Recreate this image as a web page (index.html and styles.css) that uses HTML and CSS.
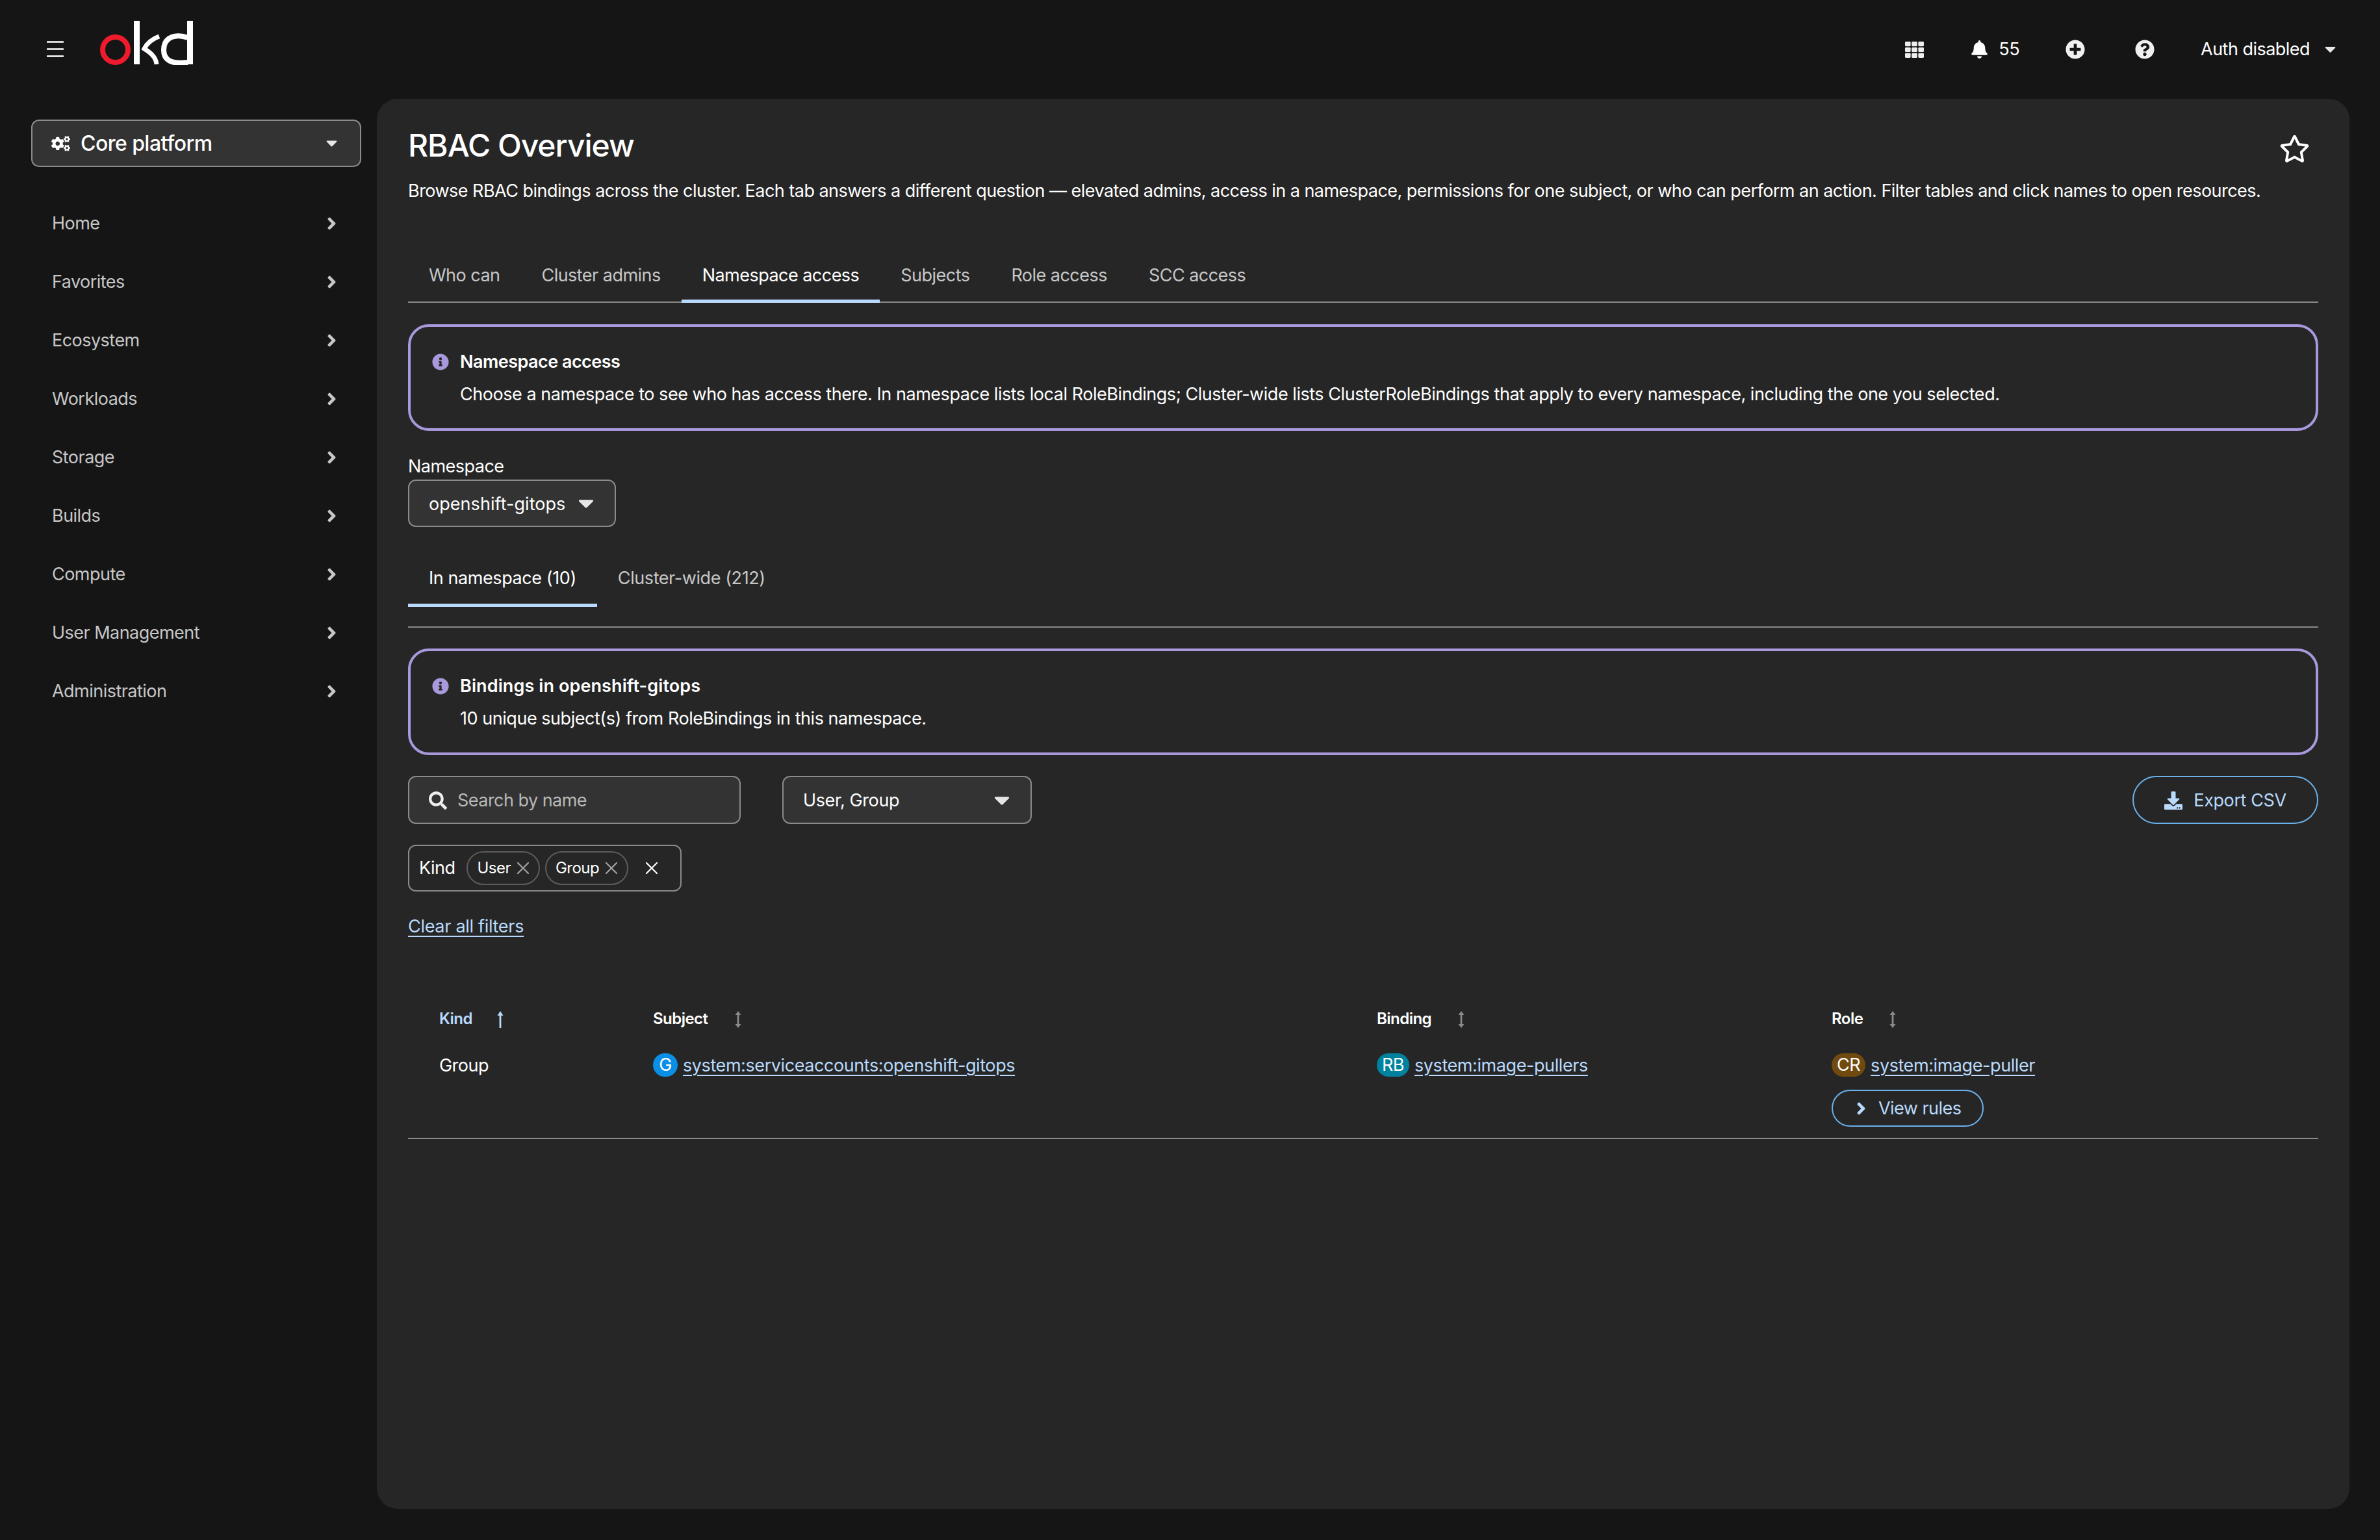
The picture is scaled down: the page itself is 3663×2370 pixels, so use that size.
FILE: index.html
```html
<!DOCTYPE html>
<html lang="en">

<head>
    <meta charset="UTF-8">
    <meta name="viewport" content="width=device-width, initial-scale=1.0">
    <title>RBAC Overview</title>
    <link rel="stylesheet" href="styles.css">
</head>

<body>
    <svg class="defs" aria-hidden="true">
        <symbol id="caret" viewBox="0 192 320 170"><path d="M31.3 192h257.3c17.8 0 26.7 21.5 14.1 34.1L174.1 354.8c-7.8 7.8-20.5 7.8-28.3 0L17.2 226.1C4.6 213.5 13.5 192 31.3 192z"/></symbol>
        <symbol id="angle" viewBox="0 0 256 512"><path d="M224.3 273l-136 136c-9.4 9.4-24.6 9.4-33.9 0l-22.6-22.6c-9.4-9.4-9.4-24.6 0-33.9l96.4-96.4-96.4-96.4c-9.4-9.4-9.4-24.6 0-33.9L54.3 103c9.4-9.4 24.6-9.4 33.9 0l136 136c9.5 9.4 9.5 24.6.1 34z"/></symbol>
        <symbol id="info" viewBox="0 0 512 512"><path d="M256 8C119.043 8 8 119.083 8 256c0 136.997 111.043 248 248 248s248-111.003 248-248C504 119.083 392.957 8 256 8zm0 110c23.196 0 42 18.804 42 42s-18.804 42-42 42-42-18.804-42-42 18.804-42 42-42zm56 254c0 6.627-5.373 12-12 12h-88c-6.627 0-12-5.373-12-12v-24c0-6.627 5.373-12 12-12h12v-64h-12c-6.627 0-12-5.373-12-12v-24c0-6.627 5.373-12 12-12h64c6.627 0 12 5.373 12 12v100h12c6.627 0 12 5.373 12 12v24z"/></symbol>
        <symbol id="close" viewBox="0 0 20 20"><path d="M2 2l16 16M18 2L2 18" fill="none" stroke="currentColor" stroke-width="2.2" stroke-linecap="round"/></symbol>
        <symbol id="sort" viewBox="0 0 10 26"><path d="M5 0l4.5 6H6.4v14h3.1L5 26 .5 20h3.1V6H.5z"/></symbol>
    </svg>

    <header class="topbar">
        <div class="brand">
            <svg class="hamburger" viewBox="0 0 26 25"><path d="M1 1.5h24M1 12.5h24M1 23.5h24" stroke="#fff" stroke-width="2.6" stroke-linecap="round"/></svg>
            <svg class="logo" viewBox="0 0 143 68" role="img" aria-label="okd">
                <circle cx="23.5" cy="44.5" r="19.5" fill="none" stroke="#ee1b2c" stroke-width="8"/>
                <path d="M52 0h9v67h-9zM134 0h9v67h-9z" fill="#fff"/>
                <path d="M91 24C80 28 72 35 68 43c8 5 18 12 19 24" fill="none" stroke="#fff" stroke-width="7"/>
                <path d="M135 26c-16-6-37-3-37 19 0 21 21 21 37 19" fill="none" stroke="#fff" stroke-width="8"/>
            </svg>
        </div>
        <div class="tools">
            <svg class="ico-grid" viewBox="0 0 29 25" fill="#eee">
                <rect width="8.6" height="7.2" rx="1.4"/><rect x="10.2" width="8.6" height="7.2" rx="1.4"/><rect x="20.4" width="8.6" height="7.2" rx="1.4"/>
                <rect y="8.9" width="8.6" height="7.2" rx="1.4"/><rect x="10.2" y="8.9" width="8.6" height="7.2" rx="1.4"/><rect x="20.4" y="8.9" width="8.6" height="7.2" rx="1.4"/>
                <rect y="17.8" width="8.6" height="7.2" rx="1.4"/><rect x="10.2" y="17.8" width="8.6" height="7.2" rx="1.4"/><rect x="20.4" y="17.8" width="8.6" height="7.2" rx="1.4"/>
            </svg>
            <svg class="ico-bell" viewBox="0 0 448 512" fill="#fff"><path d="M224 512c35.32 0 63.97-28.65 63.97-64H160.03c0 35.35 28.65 64 63.97 64zm215.39-149.71c-19.32-20.76-55.47-51.99-55.47-154.29 0-77.7-54.48-139.9-127.94-155.16V32c0-17.67-14.32-32-31.98-32s-31.98 14.33-31.98 32v20.84C118.56 68.1 64.08 130.3 64.08 208c0 102.3-36.15 133.53-55.47 154.29-6 6.45-8.66 14.16-8.61 21.71.11 16.4 12.98 32 32.1 32h383.8c19.12 0 32-15.6 32.1-32 .05-7.55-2.61-15.27-8.61-21.71z"/></svg>
            <span class="count">55</span>
            <svg class="ico-plus" viewBox="0 0 512 512" fill="#f0f0f0"><path d="M256 8C119 8 8 119 8 256s111 248 248 248 248-111 248-248S393 8 256 8zm144 276c0 6.6-5.4 12-12 12h-92v92c0 6.6-5.4 12-12 12h-56c-6.6 0-12-5.4-12-12v-92h-92c-6.6 0-12-5.4-12-12v-56c0-6.6 5.4-12 12-12h92v-92c0-6.6 5.4-12 12-12h56c6.6 0 12 5.4 12 12v92h92c6.6 0 12 5.4 12 12v56z"/></svg>
            <svg class="ico-help" viewBox="0 0 512 512" fill="#f0f0f0"><path d="M504 256c0 136.997-111.043 248-248 248S8 392.997 8 256C8 119.083 119.043 8 256 8s248 111.083 248 248zM262.655 90c-54.497 0-89.255 22.957-116.549 63.758-3.536 5.286-2.353 12.415 2.715 16.258l34.699 26.31c5.205 3.947 12.621 3.008 16.665-2.122 17.864-22.658 30.113-35.797 57.303-35.797 20.429 0 45.698 13.148 45.698 32.958 0 14.976-12.363 22.667-32.534 33.976C247.128 238.528 216 254.941 216 296v4c0 6.627 5.373 12 12 12h56c6.627 0 12-5.373 12-12v-1.333c0-28.462 83.186-29.647 83.186-106.667 0-58.002-60.165-102-116.531-102zM256 338c-25.365 0-46 20.635-46 46 0 25.364 20.635 46 46 46s46-20.636 46-46c0-25.365-20.635-46-46-46z"/></svg>
            <span class="user">Auth disabled</span>
            <svg class="caret caret-user"><use href="#caret"/></svg>
        </div>
    </header>

    <div class="layout">
        <aside class="sidebar">
            <div class="perspective">
                <svg class="ico-cogs" viewBox="0 0 640 512" fill="#fff"><path d="M512.1 191l-8.2 14.3c-3 5.3-9.4 7.5-15.1 5.4-11.8-4.4-22.6-10.7-32.1-18.6-4.6-3.8-5.8-10.5-2.8-15.7l8.2-14.3c-6.9-8-12.3-17.3-15.9-27.4h-16.5c-6 0-11.2-4.3-12.2-10.3-2-12-2.1-24.6 0-37.1 1-6 6.2-10.4 12.2-10.4h16.5c3.6-10.1 9-19.4 15.9-27.4l-8.2-14.3c-3-5.2-1.9-11.9 2.8-15.7 9.5-7.9 20.4-14.2 32.1-18.6 5.7-2.1 12.1.1 15.1 5.4l8.2 14.3c10.5-1.9 21.2-1.9 31.7 0L552 6.3c3-5.3 9.4-7.5 15.1-5.4 11.8 4.4 22.6 10.7 32.1 18.6 4.6 3.8 5.8 10.5 2.8 15.7l-8.2 14.3c6.9 8 12.3 17.3 15.9 27.4h16.5c6 0 11.2 4.3 12.2 10.3 2 12 2.1 24.6 0 37.1-1 6-6.2 10.4-12.2 10.4h-16.5c-3.6 10.1-9 19.4-15.9 27.4l8.2 14.3c3 5.2 1.9 11.9-2.8 15.7-9.5 7.9-20.4 14.2-32.1 18.6-5.7 2.1-12.1-.1-15.1-5.4l-8.2-14.3c-10.4 1.9-21.2 1.9-31.7 0zm-10.5-58.8c38.5 29.6 82.4-14.3 52.8-52.8-38.5-29.7-82.4 14.3-52.8 52.8zM386.3 286.1l33.7 16.8c10.1 5.8 14.5 18.1 10.5 29.1-8.9 24.2-26.4 46.4-42.6 65.8-7.4 8.9-20.2 11.1-30.3 5.3l-29.1-16.8c-16 13.7-34.6 24.6-54.9 31.7v33.6c0 11.6-8.3 21.6-19.7 23.6-24.6 4.2-50.4 4.4-75.9 0-11.5-2-20-11.9-20-23.6V418c-20.3-7.2-38.9-18-54.9-31.7L74 403c-10 5.8-22.9 3.6-30.3-5.3-16.2-19.4-33.3-41.6-42.2-65.7-4-10.9.4-23.2 10.5-29.1l33.3-16.8c-3.9-20.9-3.9-42.4 0-63.4L12 205.8c-10.1-5.8-14.6-18.1-10.5-29 8.9-24.2 26-46.4 42.2-65.8 7.4-8.9 20.2-11.1 30.3-5.3l29.1 16.8c16-13.7 34.6-24.6 54.9-31.7V57.1c0-11.5 8.2-21.5 19.6-23.5 24.6-4.2 50.5-4.4 76-.1 11.5 2 20 11.9 20 23.6v33.6c20.3 7.2 38.9 18 54.9 31.7l29.1-16.8c10-5.8 22.9-3.6 30.3 5.3 16.2 19.4 33.2 41.6 42.1 65.8 4 10.9.1 23.2-10 29.1l-33.7 16.8c3.9 21 3.9 42.5 0 63.5zm-117.6 21.1c59.2-77-28.7-164.9-105.7-105.7-59.2 77 28.7 164.9 105.7 105.7zm243.4 182.7l-8.2 14.3c-3 5.3-9.4 7.5-15.1 5.4-11.8-4.4-22.6-10.7-32.1-18.6-4.6-3.8-5.8-10.5-2.8-15.7l8.2-14.3c-6.9-8-12.3-17.3-15.9-27.4h-16.5c-6 0-11.2-4.3-12.2-10.3-2-12-2.1-24.6 0-37.1 1-6 6.2-10.4 12.2-10.4h16.5c3.6-10.1 9-19.4 15.9-27.4l-8.2-14.3c-3-5.2-1.9-11.9 2.8-15.7 9.5-7.9 20.4-14.2 32.1-18.6 5.7-2.1 12.1.1 15.1 5.4l8.2 14.3c10.5-1.9 21.2-1.9 31.7 0l8.2-14.3c3-5.3 9.4-7.5 15.1-5.4 11.8 4.4 22.6 10.7 32.1 18.6 4.6 3.8 5.8 10.5 2.8 15.7l-8.2 14.3c6.9 8 12.3 17.3 15.9 27.4h16.5c6 0 11.2 4.3 12.2 10.3 2 12 2.1 24.6 0 37.1-1 6-6.2 10.4-12.2 10.4h-16.5c-3.6 10.1-9 19.4-15.9 27.4l8.2 14.3c3 5.2 1.9 11.9-2.8 15.7-9.5 7.9-20.4 14.2-32.1 18.6-5.7 2.1-12.1-.1-15.1-5.4l-8.2-14.3c-10.4 1.9-21.2 1.9-31.7 0zM501.6 431c38.5 29.6 82.4-14.3 52.8-52.8-38.5-29.6-82.4 14.3-52.8 52.8z"/></svg>
                <span class="perspective-name">Core platform</span>
                <svg class="caret caret-nav"><use href="#caret"/></svg>
            </div>
            <nav class="nav">
                <a class="nav-item">Home<svg class="angle"><use href="#angle"/></svg></a>
                <a class="nav-item">Favorites<svg class="angle"><use href="#angle"/></svg></a>
                <a class="nav-item">Ecosystem<svg class="angle"><use href="#angle"/></svg></a>
                <a class="nav-item">Workloads<svg class="angle"><use href="#angle"/></svg></a>
                <a class="nav-item">Storage<svg class="angle"><use href="#angle"/></svg></a>
                <a class="nav-item">Builds<svg class="angle"><use href="#angle"/></svg></a>
                <a class="nav-item">Compute<svg class="angle"><use href="#angle"/></svg></a>
                <a class="nav-item">User Management<svg class="angle"><use href="#angle"/></svg></a>
                <a class="nav-item">Administration<svg class="angle"><use href="#angle"/></svg></a>
            </nav>
        </aside>

        <main class="panel">
            <div class="page-head">
                <div>
                    <h1>RBAC Overview</h1>
                    <p class="lead">Browse RBAC bindings across the cluster. Each tab answers a different question — elevated admins, access in a namespace, permissions for one subject, or who can perform an action. Filter tables and click names to open resources.</p>
                </div>
                <svg class="star" viewBox="0 0 576 512" fill="#fff"><path d="M528.1 171.5L382 150.2 316.7 17.8c-11.7-23.6-45.6-23.9-57.4 0L194 150.2 47.9 171.5c-26.2 3.8-36.7 36.1-17.7 54.6l105.7 103-25 145.5c-4.5 26.3 23.2 46 46.4 33.7L288 439.6l130.7 68.7c23.2 12.2 50.9-7.4 46.4-33.7l-25-145.5 105.7-103c19-18.5 8.5-50.8-17.7-54.6zM388.6 312.3l23.7 138.4L288 385.4l-124.3 65.3 23.7-138.4-100.6-98 139-20.2 62.2-126 62.2 126 139 20.2-100.6 98z"/></svg>
            </div>

            <div class="tabs">
                <a class="tab">Who can</a>
                <a class="tab">Cluster admins</a>
                <a class="tab active">Namespace access</a>
                <a class="tab">Subjects</a>
                <a class="tab">Role access</a>
                <a class="tab">SCC access</a>
            </div>

            <div class="alert">
                <svg class="info"><use href="#info"/></svg>
                <div>
                    <div class="alert-title">Namespace access</div>
                    <div class="alert-text">Choose a namespace to see who has access there. In namespace lists local RoleBindings; Cluster-wide lists ClusterRoleBindings that apply to every namespace, including the one you selected.</div>
                </div>
            </div>

            <div class="field-label">Namespace</div>
            <div class="select select-ns">openshift-gitops<svg class="caret caret-select"><use href="#caret"/></svg></div>

            <div class="subtabs">
                <a class="tab active">In namespace (10)</a>
                <a class="tab">Cluster-wide (212)</a>
            </div>
            <div class="rule"></div>

            <div class="alert">
                <svg class="info"><use href="#info"/></svg>
                <div>
                    <div class="alert-title alert-title-wide">Bindings in openshift-gitops</div>
                    <div class="alert-text">10 unique subject(s) from RoleBindings in this namespace.</div>
                </div>
            </div>

            <div class="toolbar">
                <div class="search">
                    <svg class="ico-search" viewBox="0 0 512 512" fill="#eee"><path d="M505 442.7L405.3 343c-4.5-4.5-10.6-7-17-7H372c27.6-35.3 44-79.7 44-128C416 93.1 322.9 0 208 0S0 93.1 0 208s93.1 208 208 208c48.3 0 92.7-16.4 128-44v16.3c0 6.4 2.5 12.5 7 17l99.7 99.7c9.4 9.4 24.6 9.4 33.9 0l28.3-28.3c9.4-9.4 9.4-24.6.1-34zM208 336c-70.7 0-128-57.2-128-128 0-70.7 57.2-128 128-128 70.7 0 128 57.2 128 128 0 70.7-57.2 128-128 128z"/></svg>
                    <span>Search by name</span>
                </div>
                <div class="select select-kind">User, Group<svg class="caret caret-select"><use href="#caret"/></svg></div>
                <a class="export">
                    <svg class="ico-download" viewBox="0 0 512 512" fill="#b9dafc"><path d="M216 0h80c13.3 0 24 10.7 24 24v168h87.7c17.8 0 26.7 21.5 14.1 34.1L269.7 378.3c-7.5 7.5-19.8 7.5-27.3 0L90.1 226.1c-12.6-12.6-3.7-34.1 14.1-34.1H192V24c0-13.3 10.7-24 24-24zm296 376v112c0 13.3-10.7 24-24 24H24c-13.3 0-24-10.7-24-24V376c0-13.3 10.7-24 24-24h146.7l49 49c20.1 20.1 52.5 20.1 72.6 0l49-49H488c13.3 0 24 10.7 24 24zm-124 88c0-11-9-20-20-20s-20 9-20 20 9 20 20 20 20-9 20-20zm64 0c0-11-9-20-20-20s-20 9-20 20 9 20 20 20 20-9 20-20z"/></svg>
                    Export CSV
                </a>
            </div>

            <div class="chip-group">
                <span class="chip-label">Kind</span>
                <span class="chip">User<svg class="chip-x"><use href="#close"/></svg></span>
                <span class="chip">Group<svg class="chip-x"><use href="#close"/></svg></span>
                <svg class="group-x"><use href="#close"/></svg>
            </div>

            <a class="link clear-all">Clear all filters</a>

            <table class="bindings">
                <colgroup>
                    <col class="col-kind">
                    <col class="col-subject">
                    <col class="col-binding">
                    <col>
                </colgroup>
                <thead>
                    <tr>
                        <th class="sorted">Kind<svg class="sort" viewBox="0 0 10 26"><path d="M5 0l4.5 7H6.4v19H3.6V7H.5z"/></svg></th>
                        <th>Subject<svg class="sort"><use href="#sort"/></svg></th>
                        <th>Binding<svg class="sort"><use href="#sort"/></svg></th>
                        <th>Role<svg class="sort"><use href="#sort"/></svg></th>
                    </tr>
                </thead>
                <tbody>
                    <tr>
                        <td>Group</td>
                        <td><span class="badge badge-g">G</span><a class="link">system:serviceaccounts:openshift-gitops</a></td>
                        <td><span class="badge badge-rb">RB</span><a class="link">system:image-pullers</a></td>
                        <td>
                            <span class="badge badge-cr">CR</span><a class="link">system:image-puller</a>
                            <a class="view-rules"><svg class="angle angle-btn"><use href="#angle"/></svg>View rules</a>
                        </td>
                    </tr>
                </tbody>
            </table>
        </main>
    </div>
</body>

</html>
```

FILE: styles.css
```css
* {
    box-sizing: border-box;
}

html, body {
    height: 100%;
}

body {
    margin: 0;
    display: flex;
    flex-direction: column;
    background-color: #151515;
    color: #fff;
    font-family: Inter, "Liberation Sans", sans-serif;
    font-size: 27px;
    line-height: 40px;
    letter-spacing: -0.53px;
}

a {
    color: inherit;
}

.defs {
    display: none;
}

/* top bar */
.topbar {
    height: 152px;
    flex: none;
    display: flex;
    justify-content: space-between;
    align-items: center;
    padding: 0 68px 0 72px;
}

.brand {
    display: flex;
    align-items: flex-start;
    margin-bottom: 20px;
}

.hamburger {
    width: 26px;
    height: 25px;
    margin-top: 31px;
}

.logo {
    width: 143px;
    height: 68px;
    margin-left: 56px;
}

.tools {
    display: flex;
    align-items: center;
}

.ico-grid {
    width: 29px;
    height: 25px;
}

.ico-bell {
    width: 25px;
    height: 28px;
    margin-left: 73px;
}

.count {
    margin-left: 17px;
}

.ico-plus,
.ico-help {
    width: 30px;
    height: 30px;
}

.ico-plus {
    margin-left: 71px;
}

.ico-help {
    margin-left: 77px;
}

.user {
    margin-left: 71px;
}

.caret {
    fill: #e6e6e6;
    flex: none;
}

.caret-user {
    width: 17px;
    height: 9px;
    margin-left: 23px;
}

/* sidebar */
.layout {
    flex: 1;
    min-height: 0;
    display: flex;
    padding: 0 47px 48px 0;
}

.sidebar {
    width: 580px;
    flex: none;
    padding: 32px 24px 0 48px;
}

.perspective {
    height: 73px;
    display: flex;
    align-items: center;
    padding: 0 35px 0 29px;
    background-color: #333;
    border: 2px solid #8a8a8a;
    border-radius: 12px;
}

.ico-cogs {
    width: 29px;
    height: 24px;
}

.perspective-name {
    margin-left: 16px;
    font-size: 32px;
    font-weight: 500;
    letter-spacing: -0.55px;
}

.caret-nav {
    width: 17px;
    height: 10px;
    margin-left: auto;
}

.nav {
    margin-top: 42px;
}

.nav-item {
    height: 90px;
    display: flex;
    justify-content: space-between;
    align-items: center;
    padding: 0 38px 0 32px;
    color: #c7c7c7;
}

.angle {
    width: 15px;
    height: 30px;
    fill: #c7c7c7;
}

/* main panel */
.panel {
    flex: 1;
    min-width: 0;
    padding: 40px 48px;
    background-color: #262626;
    border-radius: 32px;
}

.page-head {
    display: flex;
    justify-content: space-between;
}

h1 {
    margin: 2px 0 0;
    font-size: 48px;
    line-height: 60px;
    font-weight: 500;
    letter-spacing: -1px;
}

.lead {
    margin: 20px 0 0;
    white-space: nowrap;
}

.star {
    width: 47px;
    height: 42px;
    margin: 16px 13px 0 0;
}

.tabs {
    display: flex;
    margin-top: 78px;
    border-bottom: 2px solid #8a8a8a;
}

.tab {
    padding: 12px 32px 17px;
    margin-bottom: -2px;
    border-bottom: 5px solid transparent;
    color: #c7c7c7;
}

.tab.active {
    color: #fff;
    border-bottom-color: #b9dafc;
}

.alert {
    height: 164px;
    display: flex;
    margin-top: 33px;
    padding: 34px 33px;
    border: 4px solid #a898dc;
    border-radius: 32px;
}

.info {
    width: 26px;
    height: 26px;
    margin: 7px 17px 0 0;
    fill: #a898dc;
    flex: none;
}

.alert-title {
    font-weight: 600;
}

.alert-title-wide {
    letter-spacing: 0.1px;
}

.alert-text {
    margin-top: 10px;
    letter-spacing: -0.46px;
}

.field-label {
    margin-top: 35px;
}

.select {
    height: 73px;
    display: flex;
    align-items: center;
    justify-content: space-between;
    padding-top: 2px;
    background-color: #333;
    border: 2px solid #8a8a8a;
    border-radius: 12px;
}

.select-ns {
    width: 320px;
    padding-left: 30px;
    padding-right: 32px;
    letter-spacing: 0.05px;
}

.select-kind {
    width: 384px;
    margin-left: 64px;
    padding-left: 30px;
    padding-right: 32px;
    height: 74px;
    letter-spacing: -0.4px;
}

.caret-select {
    width: 24px;
    height: 13px;
}

.subtabs {
    display: flex;
    margin-top: 39px;
    letter-spacing: -0.42px;
}

.subtabs .tab {
    margin-bottom: 0;
    padding: 20px 32px 19px;
}

.rule {
    height: 2px;
    margin-top: 30px;
    background-color: #8a8a8a;
}

.rule + .alert {
    margin-top: 32px;
}

/* filters */
.toolbar {
    display: flex;
    align-items: stretch;
    margin-top: 32px;
}

.search {
    width: 512px;
    height: 74px;
    display: flex;
    align-items: center;
    padding: 2px 30px 0;
    background-color: #333;
    border: 2px solid #8a8a8a;
    border-radius: 12px;
    color: #b8b8b8;
}

.ico-search {
    width: 28px;
    height: 28px;
    margin-right: 16px;
}

.export {
    width: 286px;
    height: 74px;
    display: flex;
    align-items: center;
    justify-content: center;
    padding-top: 2px;
    margin-left: auto;
    border: 2px solid #6ab0ea;
    border-radius: 37px;
    color: #b9dafc;
    letter-spacing: -0.4px;
}

.ico-download {
    width: 28px;
    height: 28px;
    margin-right: 17px;
}

.chip-group {
    width: 421px;
    height: 72px;
    display: flex;
    align-items: center;
    margin-top: 32px;
    padding: 0 15px;
    border: 2px solid #8a8a8a;
    border-radius: 12px;
}

.chip-label {
    margin-right: 18px;
}

.chip {
    height: 52px;
    display: flex;
    align-items: center;
    margin-right: 8px;
    padding: 0 14px;
    border: 2px solid #5c5c5c;
    border-radius: 26px;
    font-size: 24px;
}

.chip-x {
    width: 20px;
    height: 20px;
    margin-left: 9px;
    color: #a3a3a3;
}

.group-x {
    width: 20px;
    height: 20px;
    margin-left: 18px;
    color: #fff;
}

.link {
    color: #b9dafc;
    text-decoration: underline;
    text-underline-offset: 5px;
    letter-spacing: -0.42px;
}

.clear-all {
    display: block;
    width: max-content;
    margin-top: 34px;
    letter-spacing: -0.3px;
}

/* table */
.bindings {
    width: 100%;
    margin-top: 82px;
    table-layout: fixed;
    border-collapse: collapse;
}

.col-kind {
    width: 329px;
}

.col-subject {
    width: 1114px;
}

.col-binding {
    width: 700px;
}

th {
    height: 80px;
    padding: 0 0 0 48px;
    text-align: left;
    font-size: 24px;
    font-weight: 600;
}

th.sorted {
    color: #b9dafc;
}

.sort {
    width: 10px;
    height: 26px;
    margin-left: 41px;
    vertical-align: middle;
    fill: #8a8a8a;
}

th.sorted .sort {
    margin-left: 38px;
    fill: #b9dafc;
}

td {
    padding: 12px 0 17px 48px;
    vertical-align: top;
    border-bottom: 2px solid #8a8a8a;
}

.badge {
    display: inline-block;
    height: 36px;
    min-width: 38px;
    padding: 0 8px;
    margin-right: 8px;
    border-radius: 18px;
    line-height: 36px;
    text-align: center;
    vertical-align: 1px;
}

.badge-g {
    padding: 0;
    background-color: #0a8fe6;
}

.badge-rb {
    background-color: #00829f;
}

.badge-cr {
    background-color: #714a10;
}

.view-rules {
    width: 234px;
    height: 57px;
    display: flex;
    align-items: center;
    margin-top: 17px;
    padding: 0 0 0 36px;
    border: 2px solid #6ab0ea;
    border-radius: 29px;
    color: #b9dafc;
    white-space: nowrap;
}

.angle-btn {
    margin-right: 19px;
    fill: #b9dafc;
}
```
